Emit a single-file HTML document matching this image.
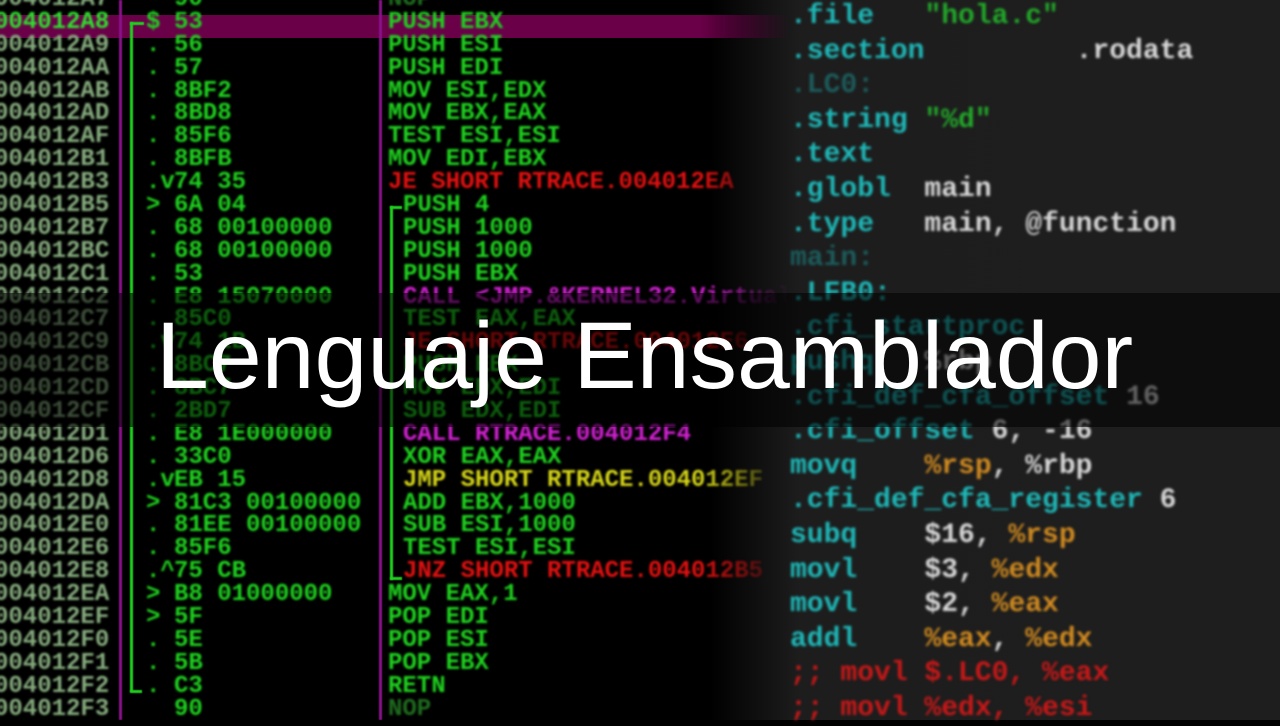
<!DOCTYPE html>
<html><head><meta charset="utf-8"><style>
html,body{margin:0;padding:0;width:1280px;height:720px;overflow:hidden;background:#000}
#right{position:absolute;left:600px;top:0;width:680px;height:720px;background:linear-gradient(to right,#000 0,#000 110px,#1d1d1d 200px,#1e1e1e 100%)}
#rc{position:absolute;left:190px;top:0px;font:bold 28px/34.6px "Liberation Mono","DejaVu Sans Mono",monospace;white-space:pre;color:#d8d8d8;filter:blur(1.3px)}
.c{color:#1fb8b8}.g{color:#22a82a}.r{color:#c81818}.o{color:#d08a20}
#left{position:absolute;left:0;top:0;width:800px;height:720px;-webkit-mask-image:linear-gradient(to right,#000 700px,transparent 790px);mask-image:linear-gradient(to right,#000 700px,transparent 790px)}
#lc{position:absolute;left:-6px;top:-11px;width:820px;font:bold 24px/22.9px "Liberation Mono","DejaVu Sans Mono",monospace;filter:blur(1.1px)}
.row{height:22.9px;position:relative}
.row span{position:absolute;top:0;white-space:pre}
.a{left:0;color:#84a97c}
.d{left:152px;color:#1ed01e}
.h{left:180px;color:#1ed01e}
.i{left:394px;color:#1ed01e}
.j{left:409px}
.G{color:#1ed01e}.R{color:#e01010}.M{color:#d020d0}.Y{color:#d4d418}.N{color:#1e6a1e}
.hl{position:absolute;left:0;top:15px;width:790px;height:23px;background:#6a0048}
.vm{position:absolute;top:0;width:3px;height:720px;background:#8a108a;filter:blur(.6px)}
.vg{position:absolute;width:3px;background:#1ed01e;filter:blur(.6px)}
#band{position:absolute;left:0;top:293px;width:1280px;height:134px;background:rgba(0,0,0,.55)}
#title{position:absolute;left:156px;top:296px;font:95px/120px "Liberation Sans",sans-serif;color:#fff;white-space:nowrap}
</style></head><body>
<div id="right"><div id="rc"><span class="c">.file</span>   <span class="g">"hola.c"</span>
<span class="c">.section</span>         .rodata
<span class="c" style="opacity:.4">.LC0:</span>
<span class="c">.string</span> <span class="g">"%d"</span>
<span class="c">.text</span>
<span class="c">.globl</span>  main
<span class="c">.type</span>   main, @function
<span class="c" style="opacity:.4">main:</span>
<span class="c">.LFB0:</span>
<span class="c">.cfi_startproc</span>
<span class="c">pushq</span>   %rbp
<span class="c">.cfi_def_cfa_offset</span> 16
<span class="c">.cfi_offset</span> 6, -16
<span class="c">movq</span>    <span class="o">%rsp</span>, %rbp
<span class="c">.cfi_def_cfa_register</span> 6
<span class="c">subq</span>    $16, <span class="o">%rsp</span>
<span class="c">movl</span>    $3, <span class="o">%edx</span>
<span class="c">movl</span>    $2, <span class="o">%eax</span>
<span class="c">addl</span>    <span class="o">%eax</span>, <span class="o">%edx</span>
<span class="r">;; movl $.LC0, %eax</span>
<span class="r">;; movl %edx, %esi</span></div></div>
<div id="left">
<div class="hl"></div>
<div class="vm" style="left:119px"></div>
<div class="vm" style="left:379px"></div>
<div class="vg" style="left:130px;top:22px;height:670px"></div>
<div class="vg" style="left:130px;top:22px;height:3px;width:14px"></div>
<div class="vg" style="left:130px;top:690px;height:3px;width:12px"></div>
<div class="vg" style="left:390px;top:206px;height:374px"></div>
<div class="vg" style="left:390px;top:206px;height:3px;width:12px"></div>
<div class="vg" style="left:390px;top:577px;height:3px;width:12px"></div>
<div id="lc"><div class="row"><span class="a">004012A7</span><span class="h">90</span><span class="i N">NOP</span></div><div class="row"><span class="a" style="color:#2ee02e">004012A8</span><span class="d">$</span><span class="h">53</span><span class="i">PUSH EBX</span></div><div class="row"><span class="a">004012A9</span><span class="d">.</span><span class="h">56</span><span class="i">PUSH ESI</span></div><div class="row"><span class="a">004012AA</span><span class="d">.</span><span class="h">57</span><span class="i">PUSH EDI</span></div><div class="row"><span class="a">004012AB</span><span class="d">.</span><span class="h">8BF2</span><span class="i">MOV ESI,EDX</span></div><div class="row"><span class="a">004012AD</span><span class="d">.</span><span class="h">8BD8</span><span class="i">MOV EBX,EAX</span></div><div class="row"><span class="a">004012AF</span><span class="d">.</span><span class="h">85F6</span><span class="i">TEST ESI,ESI</span></div><div class="row"><span class="a">004012B1</span><span class="d">.</span><span class="h">8BFB</span><span class="i">MOV EDI,EBX</span></div><div class="row"><span class="a">004012B3</span><span class="d">.v</span><span class="h">74 35</span><span class="i R">JE SHORT RTRACE.004012EA</span></div><div class="row"><span class="a">004012B5</span><span class="d">&gt;</span><span class="h">6A 04</span><span class="i j">PUSH 4</span></div><div class="row"><span class="a">004012B7</span><span class="d">.</span><span class="h">68 00100000</span><span class="i j">PUSH 1000</span></div><div class="row"><span class="a">004012BC</span><span class="d">.</span><span class="h">68 00100000</span><span class="i j">PUSH 1000</span></div><div class="row"><span class="a">004012C1</span><span class="d">.</span><span class="h">53</span><span class="i j">PUSH EBX</span></div><div class="row"><span class="a">004012C2</span><span class="d">.</span><span class="h">E8 15070000</span><span class="i j M">CALL &lt;JMP.&amp;KERNEL32.VirtualAlloc&gt;</span></div><div class="row"><span class="a">004012C7</span><span class="d">.</span><span class="h">85C0</span><span class="i j">TEST EAX,EAX</span></div><div class="row"><span class="a">004012C9</span><span class="d">.v</span><span class="h">74 1B</span><span class="i j R">JE SHORT RTRACE.004012E6</span></div><div class="row"><span class="a">004012CB</span><span class="d">.</span><span class="h">8BC7</span><span class="i j">PUSH EBX</span></div><div class="row"><span class="a">004012CD</span><span class="d">.</span><span class="h">8BC7</span><span class="i j">MOV EDX,EDI</span></div><div class="row"><span class="a">004012CF</span><span class="d">.</span><span class="h">2BD7</span><span class="i j">SUB EDX,EDI</span></div><div class="row"><span class="a">004012D1</span><span class="d">.</span><span class="h">E8 1E000000</span><span class="i j M">CALL RTRACE.004012F4</span></div><div class="row"><span class="a">004012D6</span><span class="d">.</span><span class="h">33C0</span><span class="i j">XOR EAX,EAX</span></div><div class="row"><span class="a">004012D8</span><span class="d">.v</span><span class="h">EB 15</span><span class="i j Y">JMP SHORT RTRACE.004012EF</span></div><div class="row"><span class="a">004012DA</span><span class="d">&gt;</span><span class="h">81C3 00100000</span><span class="i j">ADD EBX,1000</span></div><div class="row"><span class="a">004012E0</span><span class="d">.</span><span class="h">81EE 00100000</span><span class="i j">SUB ESI,1000</span></div><div class="row"><span class="a">004012E6</span><span class="d">.</span><span class="h">85F6</span><span class="i j">TEST ESI,ESI</span></div><div class="row"><span class="a">004012E8</span><span class="d">.^</span><span class="h">75 CB</span><span class="i j R">JNZ SHORT RTRACE.004012B5</span></div><div class="row"><span class="a">004012EA</span><span class="d">&gt;</span><span class="h">B8 01000000</span><span class="i">MOV EAX,1</span></div><div class="row"><span class="a">004012EF</span><span class="d">&gt;</span><span class="h">5F</span><span class="i">POP EDI</span></div><div class="row"><span class="a">004012F0</span><span class="d">.</span><span class="h">5E</span><span class="i">POP ESI</span></div><div class="row"><span class="a">004012F1</span><span class="d">.</span><span class="h">5B</span><span class="i">POP EBX</span></div><div class="row"><span class="a">004012F2</span><span class="d">.</span><span class="h">C3</span><span class="i">RETN</span></div><div class="row"><span class="a">004012F3</span><span class="h">90</span><span class="i N">NOP</span></div></div></div>
<div id="band"></div>
<div id="title">Lenguaje Ensamblador</div>
</body></html>
